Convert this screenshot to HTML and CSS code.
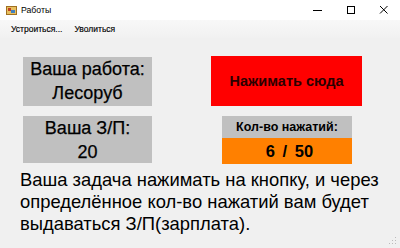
FILE: index.html
```html
<!DOCTYPE html>
<html>
<head>
<meta charset="utf-8">
<link rel="stylesheet" href="styles.css">
</head>
<body>
<div class="window">
  <div class="titlebar">
    <svg class="appicon" width="11" height="11" viewBox="0 0 11 11">
      <rect x="0.5" y="1.5" width="10" height="8" fill="#e8c060" stroke="#a07020"/>
      <rect x="2" y="3" width="3" height="3" fill="#c04020"/>
      <rect x="5" y="5" width="4" height="3" fill="#4080c0"/>
    </svg>
    <span class="title">Работы</span>
    <div class="controls">
      <svg class="ctl" width="33" height="20" viewBox="0 0 33 20"><line x1="12" y1="10.5" x2="21" y2="10.5" stroke="#000" stroke-width="1"/></svg>
      <svg class="ctl" width="33" height="20" viewBox="0 0 33 20"><rect x="13.5" y="6.5" width="7" height="7" fill="none" stroke="#000" stroke-width="1"/></svg>
      <svg class="ctl" width="33" height="20" viewBox="0 0 33 20"><path d="M13 6 L20.5 13.5 M20.5 6 L13 13.5" stroke="#000" stroke-width="1"/></svg>
    </div>
  </div>
  <div class="menubar">
    <span class="menuitem">Устроиться...</span>
    <span class="menuitem">Уволиться</span>
  </div>
  <div class="content">
    <div class="grid">
      <div class="box gray job">Ваша работа:<br>Лесоруб</div>
      <div class="redbtn">Нажимать сюда</div>
      <div class="box gray pay">Ваша З/П:<br>20</div>
      <div class="counter">
        <div class="clabel">Кол-во нажатий:</div>
        <div class="cvalue">6 / 50</div>
      </div>
    </div>
    <p class="desc">Ваша задача нажимать на кнопку, и через определённое кол-во нажатий вам будет выдаваться З/П(зарплата).</p>
  </div>
  <svg class="grip" width="8" height="8" viewBox="0 0 8 8">
    <rect x="6" y="0" width="1" height="1" fill="#bbb"/>
    <rect x="3" y="3" width="1" height="1" fill="#bbb"/>
    <rect x="6" y="3" width="1" height="1" fill="#bbb"/>
    <rect x="0" y="6" width="1" height="1" fill="#bbb"/>
    <rect x="3" y="6" width="1" height="1" fill="#bbb"/>
    <rect x="6" y="6" width="1" height="1" fill="#bbb"/>
  </svg>
</div>
</body>
</html>
```
FILE: styles.css
```css
html, body {
  margin: 0;
  padding: 0;
}
body {
  width: 400px;
  height: 248px;
  overflow: hidden;
  background: #f0f0f0;
}
.window {
  position: relative;
  width: 400px;
  height: 248px;
  background: #f0f0f0;
  font-family: "Liberation Sans", Arial, sans-serif;
  color: #000;
}
.titlebar {
  height: 20px;
  background: #fff;
  display: flex;
  align-items: center;
  font-family: "Liberation Sans", Arial, sans-serif;
  font-size: 8.7px;
}
.appicon {
  margin-left: 6px;
  margin-right: 4px;
}
.title {
  flex: 1;
}
.controls {
  display: flex;
  height: 20px;
}
.ctl {
  display: block;
}
.menubar {
  height: 18px;
  display: flex;
  align-items: center;
  background: linear-gradient(to bottom, #f8f8f8, #f1f1f1);
  font-family: "Liberation Sans", Arial, sans-serif;
  font-size: 8.5px;
  padding-left: 11px;
  gap: 12px;
  -webkit-text-stroke: 0.15px #000;
}
.content {
  padding: 18px 0 0 23px;
}
.grid {
  display: grid;
  grid-template-columns: 129px 151px;
  column-gap: 59px;
  row-gap: 10px;
}
.box {
  text-align: center;
  font-size: 18px;
  line-height: 24px;
  -webkit-text-stroke: 0.25px #000;
  box-sizing: border-box;
}
.gray {
  background: #c0c0c0;
}
.job {
  height: 49px;
  margin-top: 1px;
  padding-top: 0;
}
.pay {
  height: 47px;
  padding-top: 0;
}
.redbtn {
  background: #ff0000;
  height: 50px;
  display: flex;
  align-items: center;
  justify-content: center;
  font-weight: bold;
  font-size: 14.5px;
  color: #2a0000;
}
.counter {
  margin-left: 11px;
  width: 130px;
  display: flex;
  flex-direction: column;
  height: 48px;
}
.clabel {
  background: #c0c0c0;
  height: 22px;
  display: flex;
  align-items: center;
  justify-content: center;
  font-weight: bold;
  font-size: 12.5px;
}
.cvalue {
  background: #ff8000;
  flex: 1;
  display: flex;
  align-items: center;
  justify-content: center;
  font-weight: bold;
  font-size: 16.5px;
  word-spacing: 3px;
  padding-left: 5px;
}
.desc {
  margin: 5px 0 0 -3px;
  width: 375px;
  font-size: 18.4px;
  line-height: 22px;
}
.grip {
  position: absolute;
  right: 3px;
  bottom: 3px;
}
```
